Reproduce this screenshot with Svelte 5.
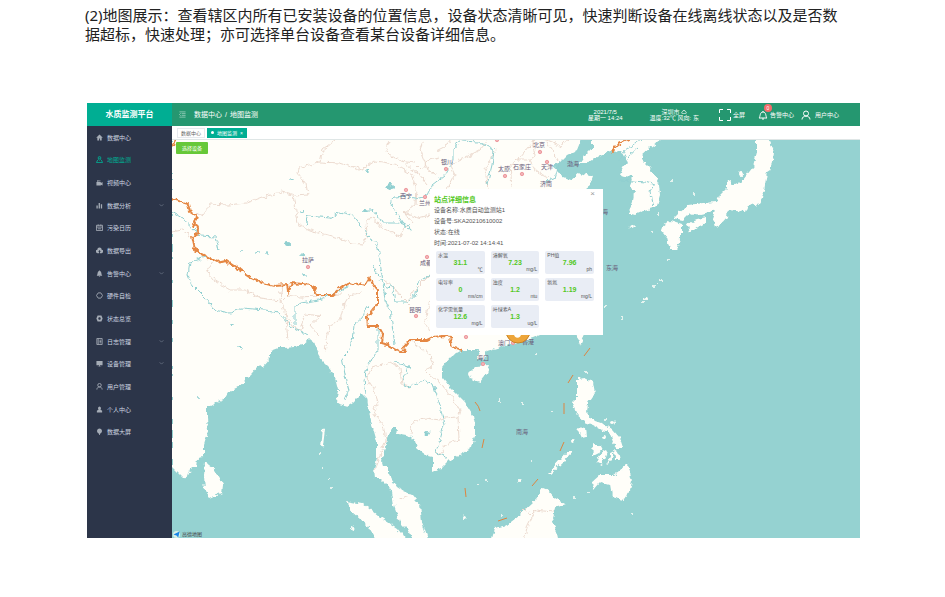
<script>
    const solid = true;

    const menu = [
        { name: "数据中心", solid, icon: "M1 8 8 1l7 7-1 1-1-1v7H9v-5H7v5H3V8L2 9z" },
        { name: "地图监测", active: true, icon: "M8 10C4 7 4 1 8 1s4 6 0 9zM8 4v2M4 9 1 15h14l-3-6" },
        { name: "视频中心", solid, icon: "M1 7h10v2l4-2v8l-4-2v2H1zM3 3a2 2 0 1 1 0 3zM8 2a2 2 0 1 1 0 4z" },
        { name: "数据分析", more: true, solid, icon: "M1 8h3v7H1zM6 2h3v13H6zM11 5h3v10h-3z" },
        { name: "污染日历", icon: "M1 3h14v12H1zM1 7h14M5 1v3M11 1v3M4 11h8" },
        { name: "数据导出", solid, icon: "M4 14a4 4 0 0 1-1-8 5 5 0 0 1 10 0 4 4 0 0 1-1 8H9v-3h2L8 7l-3 4h2v3z" },
        { name: "告警中心", more: true, solid, icon: "M2 12c2-2 1-9 5-10V1h2v1c4 1 3 8 5 10v1H2zM6 14h4l-2 2z" },
        { name: "硬件自检", icon: "M5 2h6l4 6-4 6H5L1 8z" },
        { name: "状态总览", bold: true, icon: "M5 3h6l2 5-2 5H5L3 8z" },
        { name: "日志管理", more: true, icon: "M2 1h12v14H2zM5 1v14M8 5h4M8 8h4M8 11h4" },
        { name: "设备管理", more: true, solid, icon: "M1 2h14v10H9v2h3v1H4v-1h3v-2H1z" },
        { name: "用户管理", icon: "M8 1a4 4 0 1 1 0 8 4 4 0 0 1 0-8zM2 15c0-8 12-8 12 0" },
        { name: "个人中心", solid, icon: "M8 1a4 4 0 0 1 2 7l4 3v4H2v-4l4-3a4 4 0 0 1 2-7z" },
        { name: "数据大屏", solid, icon: "M8 1a6 6 0 0 1 3 11l-2 1v3H7v-3l-2-1A6 6 0 0 1 8 1z" },
    ];

    const info = [
        ["设备名称", "水质自动监测站1"],
        ["设备号", "SKA20210610002"],
        ["状态", "在线"],
        ["时间", "2021-07-02 14:14:41"],
    ];

    const readings = [
        { label: "水温", value: "31.1", unit: "℃" },
        { label: "溶解氧", value: "7.23", unit: "mg/L" },
        { label: "PH值", value: "7.96", unit: "ph" },
        { label: "电导率", value: "0", unit: "ms/cm" },
        { label: "浊度", value: "1.2", unit: "ntu" },
        { label: "氨氮", value: "1.19", unit: "mg/L" },
        { label: "化学需氧量", value: "12.6", unit: "mg/L" },
        { label: "叶绿素A", value: "1.3", unit: "ug/L" },
    ];

    const land = [
        // mainland
        "172,130 172,467 178,473 183,478 188,475 190,469 197,467 198,458 204,457 204,445 208,432 207,418 207,408 213,405 218,401 225,398 228,393 238,388 245,380 252,373 257,367 263,366 270,358 270,351 278,348 285,348 295,347 303,345 310,339 314,341 317,352 322,361 328,367 333,373 337,382 339,390 337,403 347,406 353,402 362,393 367,398 369,412 373,428 377,442 377,458 374,468 375,478 380,478 387,485 392,492 394,505 400,522 410,532 413,542 429,542 422,522 420,505 412,495 403,491 397,487 392,480 388,472 388,467 383,467 382,460 385,448 388,435 391,428 398,428 397,434 408,435 415,440 418,450 425,455 433,457 433,472 442,468 450,460 463,453 472,447 475,435 475,425 473,415 465,402 450,387 442,377 442,367 450,357 462,350 472,350 480,350 478,358 483,360 487,352 500,348 513,343 533,338 547,332 575,310 590,280 595,240 570,200 590,185 593,177 580,173 571,180 563,177 560,172 552,165 560,162 567,155 577,150 585,130 593,130 593,147 585,155 580,163 587,163 600,155 613,150 623,153 628,162 623,168 620,175 632,177 630,187 634,191 633,202 628,213 635,215 642,212 652,209 657,205 660,195 659,185 650,168 642,160 642,155 650,148 664,138 664,130",
        // Japan
        "757,130 768,138 774,152 773,162 770,170 767,172 765,185 763,198 760,203 756,208 753,203 747,207 745,212 737,211 728,210 727,217 720,225 715,227 712,218 715,210 710,213 700,215 690,213 683,220 673,218 678,213 688,205 703,203 717,202 720,195 727,188 727,182 732,180 732,185 743,180 753,167 757,152",
        "687,223 697,219 707,217 707,222 698,227 690,233",
        "662,227 670,221 682,225 682,232 677,250 670,250 667,238 663,233",
        "629,227 636,225 634,229",
        // Philippines
        "577,379 585,378 593,382 595,393 588,403 587,413 593,420 602,423 612,432 602,430 593,425 585,422 577,415 572,403 577,398",
        "577,427 585,428 586,437 582,438",
        "592,443 602,447 599,453 593,456",
        "603,450 607,452 602,465 596,462",
        "613,450 613,456 605,467",
        "607,425 613,430 620,438 623,448 618,448 613,442",
        "614,449 618,452 620,460 615,460",
        "592,482 600,475 613,475 620,470 628,463 632,482 630,490 623,500 612,497 610,485 600,482 593,490",
        "547,474 560,460 567,452 572,452 563,462 550,474",
        // Borneo, Hainan, Taiwan
        "491,542 495,528 507,525 520,515 533,503 543,488 548,490 555,498 566,504 555,508 552,518 555,528 558,542",
        "468,373 475,366 490,365 487,373 480,382 470,379",
        "575,330 586,330 580,345",
        // Sumatra, Sri Lanka, Andaman
        "346,501 363,504 377,515 397,528 408,542 377,542 367,525 352,512",
        "205,462 213,468 223,485 222,493 210,498 205,492 204,475",
        "323,428 325,429 323,446 321,447",
    ];

    // x, y, radius
    const islets = [
        [320, 454, 1], [323, 468, 1], [329, 478, 1], [332, 488, 1], [353, 528, 2], [464, 517, 2],
        [500, 400, 1], [522, 403, 1], [536, 354, 1], [552, 411, 1], [532, 461, 1], [520, 481, 2],
        [502, 516, 1], [477, 484, 1], [486, 481, 1], [573, 441, 2], [586, 372, 1], [605, 420, 1],
        [613, 423, 2], [604, 437, 2], [575, 498, 1], [588, 493, 1], [633, 513, 1], [741, 174, 2],
        [728, 184, 1], [694, 195, 1], [669, 259, 1], [660, 280, 1], [655, 286, 1], [646, 299, 2],
        [643, 303, 1], [653, 232, 1], [658, 214, 1], [605, 306, 1], [622, 318, 1], [672, 180, 1],
    ];

    const provinces = [
        "M196 215 205 213 210 204 228 205 246 203 262 197 282 192 295 196 308 195 306 184 298 173 299 168 320 162 340 163 362 170 375 161 395 164 412 174 416 188 415 205 405 213 412 222 404 228 400 236 382 228 374 218 366 220 367 235 362 244 352 243 335 237 310 230 298 224 295 205 293 196",
        "M320 162 323 150 336 140M390 141 385 152 400 161 415 163 422 170 428 160 440 157M424 140 420 150 428 170 437 175",
        "M436 151 448 145 452 140M428 185 420 175 400 160M447 190 455 175 450 165 464 158 480 150 488 140M488 188 485 170 495 150M512 187 510 165 520 158 530 146 535 140M515 160 528 160 535 155 532 142M545 140 553 152 558 160M530 160 536 172 548 178M547 141 560 146 568 140",
        "M405 213 418 218 430 215M385 280 392 285 400 295 410 305M430 275 415 290 408 300M430 300 425 320 430 332",
        "M172 232 182 230 190 236M213 262 207 272 214 280 230 290 245 290 260 298 282 301 288 295 300 297 320 296 340 294M282 284 280 300 285 310 288 340",
        "M362 292 350 295 344 305 340 320 330 325 327 340 325 352M318 335 310 325 320 316 305 314 300 330 293 325 285 314",
        "M366 378 372 368 390 362 400 368 402 385 410 387M366 378 374 390 378 402 373 412 383 425 386 440 380 455 374 470",
        "M411 435 413 422 425 418 440 420 445 418 458 417 460 410 450 395 440 382 430 375 425 370 433 366 430 355 420 347 410 340",
        "M458 417 459 440 445 445 440 455 435 450M400 498 410 495M520 513 525 508 530 515 535 510 553 512M535 511 528 525 524 540",
    ];

    const rivers = [
        "M172 212 182 218 195 230 200 236 216 237 219 250",
        "M206 257 190 262 188 275 192 285 205 298 215 310 230 313 242 308 265 310 278 312 290 325 308 335",
        "M306 225 309 216 330 218 340 212 352 215 368 235 378 247 382 275 385 300 390 310 393 330 395 345",
        "M363 210 372 210 378 215 382 223 398 223 410 225 411 230 402 222 391 205 393 197 405 196 415 198 427 195 432 185 445 175 453 160 453 148 462 141 478 142 494 150 492 165 487 185",
        "M350 286 335 293 318 300 300 303 295 306 295 325",
        "M372 265 380 278 387 288 392 285 395 302 408 302 416 293 418 283 430 275",
        "M352 340 354 325 363 317 367 305",
        "M352 336 350 350 342 358 346 380 349 390 345 400M378 325 378 350 368 365 364 380 366 395",
        "M395 363 410 366 403 378 405 388 424 380 433 385 440 405 444 425 440 440 436 453 448 458",
        "M638 148 630 155 624 165M620 180 645 182 655 185 650 192 652 205 655 208M560 160 555 178 545 182M640 140 625 150 620 160",
    ];

    const frontier = [
        "172,199 175,200 188,204 190,212 196,216 194,223 199,233 192,236 195,250 206,256 217,262 225,260 243,272 252,278 262,283 275,286 287,285 288,292 292,283 302,284 312,285 317,295 333,295 341,288 350,282 365,286 369,279 377,290 377,305 367,318 368,326 378,326 383,335 382,343 388,345 400,352 406,352 403,348 410,340 427,340 433,337 443,336 450,337 452,347 462,350",
        "172,147 174,146 176,138",
        "612,151 618,144 630,138",
    ];

    const dashes = [
        "M475 402Q479 406 480 411", "M484 439 482 448", "M465 488 466 497", "M498 521 507 518",
        "M532 486 538 479", "M560 451 564 442", "M564 403V414", "M568 383 573 375", "M584 356 590 348",
    ];

    const lakes = [
        [390, 187, 4, 3], [288, 244, 3, 2], [303, 255, 3, 1], [257, 253, 2, 1], [243, 251, 1, 1],
        [267, 252, 1, 2], [291, 179, 2, 1], [367, 171, 2, 1], [302, 211, 2, 1], [365, 210, 2, 1],
        [304, 275, 2, 1], [240, 348, 2, 1], [232, 325, 2, 1], [198, 398, 1, 1], [427, 433, 3, 2],
    ];

    const cities = [
        [406, 190], [425, 197], [308, 267], [427, 257], [416, 316], [446, 169], [505, 176], [522, 174],
        [540, 152], [547, 162], [483, 364], [513, 343], [497, 140], [466, 337],
    ];

    const labels = [
        ["西宁", 406, 198], ["兰州", 425, 205], ["拉萨", 308, 262], ["成都", 426, 265],
        ["昆明", 415, 312], ["银川", 447, 164], ["太原", 504, 171], ["石家庄", 522, 169],
        ["北京", 539, 147], ["天津", 547, 169], ["济南", 546, 186], ["渤海", 573, 166],
        ["黄海", 602, 214], ["东海", 612, 270], ["南海", 522, 434], ["海口", 483, 360],
        ["澳门", 504, 345], ["香港", 528, 344],
    ];
</script>

<main class="page">
    <p class="caption">
        (2)地图展示：查看辖区内所有已安装设备的位置信息，设备状态清晰可见，快速判断设备在线离线状态以及是否数<br />据超标，快速处理；亦可选择单台设备查看某台设备详细信息。
    </p>

    <div class="app">
        <aside class="sidebar">
            <h1>水质监测平台</h1>
            <nav>
                {#each menu as item}
                    <a href="#menu" class:active={item.active}>
                        <svg class:solid={item.solid} class:bold={item.bold} viewBox="0 0 16 16"><path d={item.icon} /></svg>
                        <span>{item.name}</span>
                        {#if item.more}
                            <svg class="arrow" viewBox="0 0 8 8"><path d="M1 2 4 5 7 2" /></svg>
                        {/if}
                    </a>
                {/each}
            </nav>
        </aside>

        <div class="content">
            <header>
                <button class="fold" aria-label="收起菜单">
                    <svg viewBox="0 0 16 16"><path d="M1 2h14M6 6h9M6 10h9M1 14h14M4 5 1 8l3 3" /></svg>
                </button>
                <div class="crumbs"><a href="#home">数据中心</a><span>/</span><a href="#map">地图监测</a></div>
                <div class="status date">2021/7/5<br />星期一 14:24</div>
                <div class="status weather">
                    深圳市 <svg viewBox="0 0 16 12"><path d="M4 11a3 3 0 0 1 0-6 4 4 0 0 1 8 0 3 3 0 0 1 0 6z" /></svg><br />温度:32℃ 风向: 东
                </div>
                <button class="tool full">
                    <svg viewBox="0 0 24 24"><path d="M1 8V1h7M16 1h7v7M23 16v7h-7M8 23H1v-7" /></svg>
                    <span>全屏</span>
                </button>
                <button class="tool alarm">
                    <svg viewBox="0 0 20 20"><path d="M2 16c3-2 1-12 8-12s5 10 8 12zM8 18h4M10 4V2" /></svg>
                    <span>告警中心</span>
                    <i>0</i>
                </button>
                <button class="tool user">
                    <svg viewBox="0 0 20 20"><path d="M10 2a5 5 0 1 1 0 10 5 5 0 0 1 0-10zM2 19c0-9 16-9 16 0" /></svg>
                    <span>用户中心</span>
                </button>
            </header>

            <div class="tabs">
                <a href="#home">数据中心</a>
                <a href="#map" class="current"><b></b>地图监测<span>×</span></a>
            </div>

            <section class="map">
                <svg class="chart" viewBox="172 140 688 398" preserveAspectRatio="xMidYMid slice">
                    <defs>
                        <filter id="rough" filterUnits="userSpaceOnUse" x="160" y="128" width="712" height="422" color-interpolation-filters="sRGB">
                            <feTurbulence type="fractalNoise" baseFrequency="0.2" numOctaves="2" seed="4" />
                            <feDisplacementMap in="SourceGraphic" scale="6" xChannelSelector="R" yChannelSelector="G" />
                        </filter>
                    </defs>
                    <g filter="url(#rough)">
                        {#each land as points}
                            <polygon class="land" {points} />
                        {/each}
                        {#each islets as [cx, cy, r]}
                            <circle class="land" {cx} {cy} {r} />
                        {/each}
                        {#each provinces as d}
                            <path class="province" {d} />
                        {/each}
                        {#each rivers as d}
                            <path class="river" {d} />
                        {/each}
                        {#each lakes as [cx, cy, rx, ry]}
                            <ellipse class="lake" {cx} {cy} {rx} {ry} />
                        {/each}
                        {#each frontier as points}
                            <polyline class="frontier" {points} />
                        {/each}
                    </g>
                    {#each dashes as d}
                        <path class="dash" {d} />
                    {/each}
                    {#each cities as [cx, cy]}
                        <circle class="ring" {cx} {cy} r="1.7" />
                        <circle class="dot" {cx} {cy} r="0.8" />
                    {/each}
                    {#each labels as [name, x, y]}
                        <text {x} {y}>{name}</text>
                    {/each}
                    <circle class="pin" cx="518" cy="331" r="12" />
                    <path class="drop" d="M514 334c0 5 7 5 7 0l-3-4z" />
                </svg>

                <button class="choose">选择设备</button>

                <article class="popup">
                    <button class="close" aria-label="关闭">×</button>
                    <h2>站点详细信息</h2>
                    {#each info as [key, value]}
                        <p>{key}:{value}</p>
                    {/each}
                    <div class="cards">
                        {#each readings as item}
                            <div class="card">
                                <span>{item.label}</span>
                                <strong>{item.value}</strong>
                                <small>{item.unit}</small>
                            </div>
                        {/each}
                    </div>
                </article>

                <div class="brand">
                    <svg viewBox="0 0 16 16"><circle cx="8" cy="8" r="8" fill="#d8f0e8" /><path d="M1 8 15 1l-3 14-4-5z" fill="#1785e8" /></svg>
                    高德地图
                </div>
            </section>
        </div>
    </div>
</main>

<style>
    :global(body) {
        margin: 0;
        background: #fff;
    }
    .page {
        padding: 6px 85px 59px 87px;
        font-family: "Liberation Sans", "Noto Sans CJK SC", sans-serif;
        font-size: 6px;
    }
    .caption {
        margin: 0 -20px 59px -2px;
        font-family: "Noto Sans", "Noto Sans CJK SC", sans-serif;
        font-size: 15px;
        line-height: 19px;
        color: #222;
        white-space: nowrap;
    }
    a {
        color: inherit;
        text-decoration: none;
    }
    button {
        padding: 0;
        border: none;
        background: none;
        font: inherit;
        color: inherit;
    }
    svg {
        fill: none;
        stroke: currentColor;
    }
    .app {
        display: flex;
        min-height: 435px;
    }

    /** Sidebar **/
    .sidebar {
        flex: none;
        width: 85px;
        background: #2c3549;
        color: #cfd7e2;
    }
    h1 {
        margin: 0;
        background: #00ae93;
        color: #fff;
        font-size: 8px;
        line-height: 23px;
        text-align: center;
    }
    nav {
        display: grid;
        grid-auto-rows: 1fr;
        min-height: 317px;
    }
    nav a {
        display: flex;
        align-items: center;
        gap: 4px;
        padding: 0 8px 0 9px;
    }
    nav svg {
        width: 7px;
        height: 7px;
        stroke-width: 2;
        color: #a5acb6;
    }
    nav .solid {
        fill: currentColor;
        stroke: none;
    }
    nav .bold {
        stroke-width: 4;
    }
    nav .arrow {
        width: 5px;
        height: 5px;
        margin-left: auto;
        stroke-width: 1;
        color: #7c8595;
    }
    nav .active,
    nav .active svg {
        color: #00ae93;
    }

    /** Top bar **/
    .content {
        flex: 1;
        display: flex;
        flex-direction: column;
        min-width: 0;
    }
    header {
        display: flex;
        align-items: center;
        height: 23px;
        padding: 0 21px 0 7px;
        background: #259770;
        color: #fff;
        white-space: nowrap;
    }
    .fold {
        display: flex;
        margin-right: 8px;
    }
    .fold svg {
        width: 7px;
        height: 7px;
    }
    .crumbs {
        display: flex;
        align-items: baseline;
        gap: 3px;
        margin-right: auto;
        font-size: 7px;
        line-height: 10px;
    }
    .status {
        line-height: 6px;
        text-align: center;
    }
    .status svg {
        width: 6px;
        height: 4px;
        stroke-width: 2;
    }
    .date {
        margin-right: 27px;
    }
    .weather {
        margin-right: 20px;
    }
    .tool {
        position: relative;
        display: flex;
        align-items: center;
        gap: 2px;
    }
    .tool svg {
        width: 10px;
        height: 10px;
        stroke-width: 2;
    }
    .full {
        margin-right: 13px;
    }
    .full svg {
        width: 12px;
        height: 12px;
    }
    .alarm {
        margin-right: 7px;
    }
    .user {
        gap: 4px;
    }
    .tool i {
        position: absolute;
        left: 6px;
        top: -6px;
        width: 8px;
        border-radius: 4px;
        background: #f56c6c;
        font-size: 5px;
        font-style: normal;
        line-height: 8px;
        text-align: center;
    }

    /** Open pages **/
    .tabs {
        display: flex;
        align-items: center;
        gap: 2px;
        height: 13px;
        padding-left: 5px;
        border-bottom: 1px solid #dfe6e6;
        background: #fff;
        color: #666;
        font-size: 5px;
        line-height: 8px;
    }
    .tabs a {
        display: flex;
        align-items: center;
        gap: 3px;
        padding: 0 3px;
        border: 1px solid #e6e9ee;
    }
    .tabs .current {
        border-color: #00ae93;
        background: #00ae93;
        color: #fff;
    }
    .tabs b {
        width: 3px;
        height: 3px;
        border-radius: 50%;
        background: #fff;
    }

    /** Map **/
    .map {
        position: relative;
        flex: 1;
        overflow: hidden;
        background: #95d2d1;
    }
    .chart {
        position: absolute;
        width: 100%;
        height: 100%;
        stroke: none;
    }
    .land {
        fill: #fffef9;
    }
    .province {
        fill: none;
        stroke: #ecdacf;
    }
    .river {
        fill: none;
        stroke: #90cfd0;
    }
    .lake {
        fill: #90cfd0;
    }
    .frontier {
        fill: none;
        stroke: #e58743;
        stroke-width: 2;
    }
    .dash {
        stroke: #dd8540;
        stroke-width: 1;
        fill: none;
    }
    .ring {
        fill: #fff;
        stroke: #ee9a9f;
        stroke-width: 1;
    }
    .dot {
        fill: #e0505a;
    }
    text {
        fill: #675a78;
        font-size: 6px;
        text-anchor: middle;
    }
    .pin {
        fill: #eda53a;
        stroke: #c98425;
    }
    .drop {
        fill: #fff;
    }
    .choose {
        position: absolute;
        left: 4px;
        top: 2px;
        padding: 0 6px;
        border-radius: 1px;
        background: #67c839;
        color: #fff;
        font-size: 5px;
        line-height: 12px;
    }
    .popup {
        position: absolute;
        left: 258px;
        top: 49px;
        box-sizing: border-box;
        width: 173px;
        padding: 5px 9px 7px 4px;
        background: #fff;
        color: #555;
    }
    .popup h2 {
        margin: 0;
        color: #52c822;
        font-size: 7px;
        line-height: 11px;
    }
    .popup p {
        margin: 0;
        line-height: 11px;
    }
    .close {
        position: absolute;
        right: 8px;
        top: 1px;
        color: #999;
        font-size: 8px;
        line-height: 8px;
    }
    .cards {
        display: grid;
        grid-template-columns: repeat(3, 1fr);
        gap: 4px 6px;
        margin: 2px 0 0 2px;
    }
    .card {
        display: flex;
        flex-direction: column;
        padding: 1px 2px;
        border-radius: 2px;
        background: #e9edf5;
        font-size: 5px;
        line-height: 7px;
    }
    .card strong {
        color: #52c822;
        font-size: 7px;
        text-align: center;
    }
    .card small {
        font-size: 5px;
        text-align: right;
    }
    .brand {
        position: absolute;
        left: 1px;
        bottom: 0;
        display: flex;
        align-items: center;
        gap: 2px;
        color: #444;
        font-size: 5px;
        line-height: 8px;
    }
    .brand svg {
        width: 7px;
        height: 7px;
        stroke: none;
    }
</style>
